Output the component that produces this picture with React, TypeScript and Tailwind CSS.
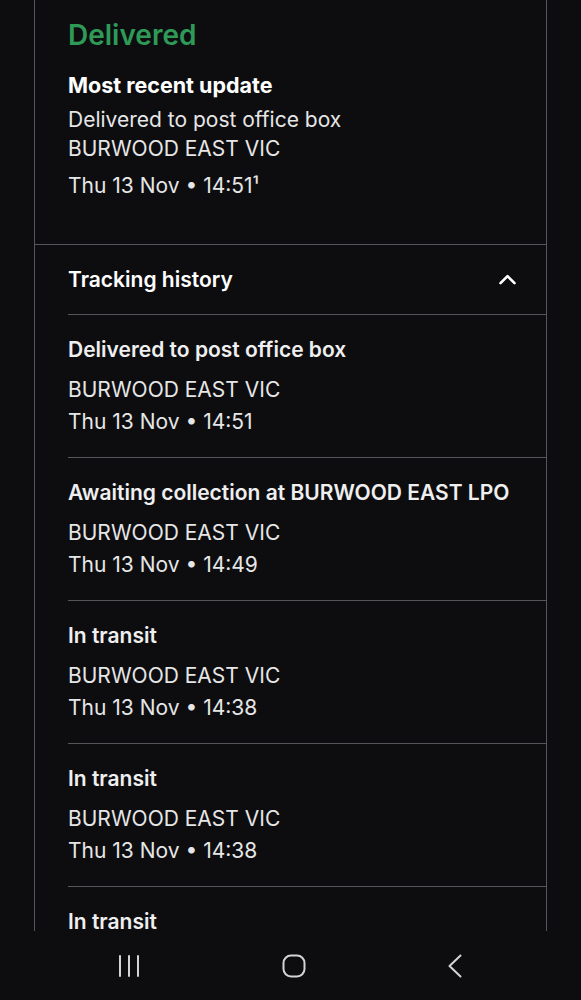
type Event = { title: string; place: string; when: string };

const HISTORY: Event[] = [
  { title: "Delivered to post office box", place: "BURWOOD EAST VIC", when: "Thu 13 Nov • 14:51" },
  { title: "Awaiting collection at BURWOOD EAST LPO", place: "BURWOOD EAST VIC", when: "Thu 13 Nov • 14:49" },
  { title: "In transit", place: "BURWOOD EAST VIC", when: "Thu 13 Nov • 14:38" },
  { title: "In transit", place: "BURWOOD EAST VIC", when: "Thu 13 Nov • 14:38" },
  { title: "In transit", place: "BURWOOD EAST VIC", when: "Thu 13 Nov • 14:31" },
];

function NavBar() {
  return (
    <div className="h-[69px] flex items-center justify-between px-[118px] text-[#d4d4d6]">
      {/* recents */}
      <svg width="22" height="22" viewBox="0 0 22 22" fill="none" stroke="currentColor" strokeWidth="2" strokeLinecap="round">
        <path d="M2 1v20M11 1v20M20 1v20" />
      </svg>
      {/* home */}
      <svg width="24" height="24" viewBox="0 0 24 24" fill="none" stroke="currentColor" strokeWidth="2">
        <rect x="1.5" y="1.5" width="21" height="21" rx="7.5" />
      </svg>
      {/* back */}
      <svg width="16" height="24" viewBox="0 0 16 24" fill="none" stroke="currentColor" strokeWidth="2" strokeLinecap="round" strokeLinejoin="round">
        <path d="M13.5 1.5L2.5 12l11 10.5" />
      </svg>
    </div>
  );
}

function HistoryItem({ e }: { e: Event }) {
  return (
    <div className="border-t border-[#55555a] pt-[21px] pb-[21px]">
      <p className="text-[21px] leading-[28px] font-semibold text-[#efefef]">{e.title}</p>
      <p className="mt-[12px] text-[21px] leading-[28px] text-[#e6e6e6]">{e.place}</p>
      <p className="mt-[4px] text-[21px] leading-[28px] text-[#e6e6e6]">{e.when}</p>
    </div>
  );
}

export default function App() {
  return (
    <div className="h-[1000px] bg-[#0d0d10] flex flex-col font-['Inter',sans-serif]">
      <div className="h-[931px] overflow-hidden px-[34px]">
        <div className="border-x border-[#55555a] min-h-full">
          {/* Status summary */}
          <div className="border-b border-[#55555a] pl-[33px] pt-[18px] pb-[44px]">
            <h2 className="text-[28px] leading-[34px] font-semibold text-[#2f9a58]">Delivered</h2>
            <p className="mt-[19px] text-[21.5px] leading-[28px] font-bold text-white">Most recent update</p>
            <p className="mt-[6px] text-[21px] leading-[29px] text-[#e6e6e6]">Delivered to post office box</p>
            <p className="text-[21px] leading-[29px] text-[#e6e6e6]">BURWOOD EAST VIC</p>
            <p className="mt-[8px] text-[21px] leading-[29px] text-[#e6e6e6]">Thu 13 Nov • 14:51¹</p>
          </div>

          {/* Tracking history */}
          <div className="h-[69px] flex items-center justify-between pl-[33px] pr-[30px]">
            <span className="text-[21px] font-semibold text-white">Tracking history</span>
            <svg width="17" height="11" viewBox="0 0 17 11" fill="none" stroke="white" strokeWidth="2.6" strokeLinecap="round" strokeLinejoin="round">
              <path d="M1.5 9.2L8.5 2.2l7 7" />
            </svg>
          </div>
          <div className="ml-[33px]">
            {HISTORY.map((e, i) => (
              <HistoryItem key={i} e={e} />
            ))}
          </div>
        </div>
      </div>
      <NavBar />
    </div>
  );
}
